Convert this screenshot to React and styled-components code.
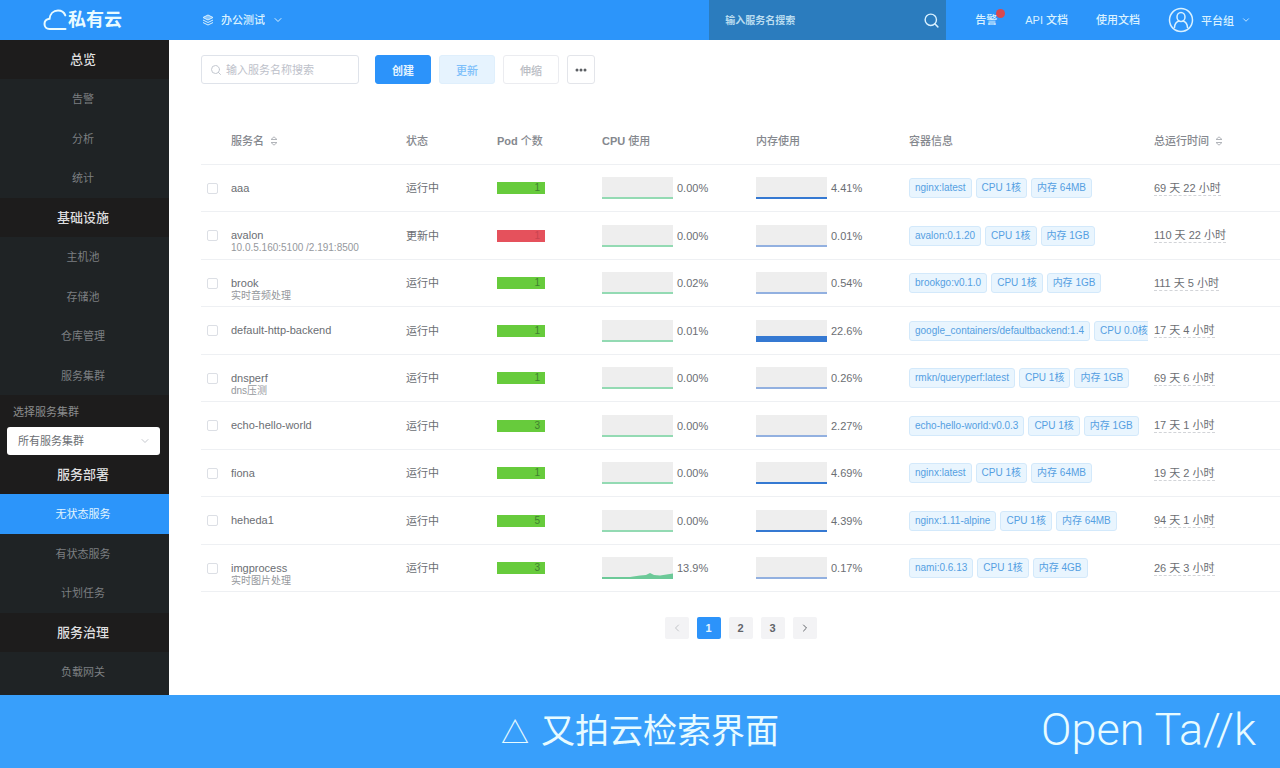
import styled, { createGlobalStyle } from "styled-components";
import { ChevronDown, ChevronLeft, ChevronRight, Search } from "lucide-react";

const GlobalStyle = createGlobalStyle`
  * {
    box-sizing: border-box;
  }

  body {
    margin: 0;
    background: #ffffff;
    color: #6b6e73;
    font-family: "Liberation Sans", "Noto Sans CJK SC", sans-serif;
    font-size: 11px;
    line-height: 14px;
  }

  button, input, select {
    margin: 0;
    font-family: inherit;
    font-size: 11px;
  }

  a {
    color: inherit;
    text-decoration: none;
  }
`;

const Page = styled.div`
  min-height: 100vh;
  display: flex;
  flex-direction: column;
`;

/* Top bar */

const TopBar = styled.header`
  height: 40px;
  display: flex;
  align-items: center;
  background: #2c95fa;
  color: #d9f1ff;
`;

const Logo = styled.a`
  width: 169px;
  padding-right: 4px;
  display: flex;
  align-items: center;
  justify-content: center;
  color: #e9fbff;
  font-size: 18px;
  line-height: 24px;
  font-weight: 700;
`;

const TeamPicker = styled.div`
  margin-left: 33px;
  display: flex;
  align-items: center;
  gap: 7px;
`;

const TeamSelect = styled.select`
  appearance: none;
  padding: 0;
  border: 0;
  background: transparent;
  color: inherit;
  font-weight: 500;
`;

const GlobalSearch = styled.form`
  width: 237px;
  height: 40px;
  margin-left: auto;
  padding: 0 6px 0 16px;
  display: flex;
  align-items: center;
  background: #2b7cbe;
`;

const GlobalSearchInput = styled.input`
  flex: 1;
  min-width: 0;
  padding: 0;
  border: 0;
  outline: 0;
  background: transparent;
  color: #d9f1ff;
  font-size: 10px;
  font-weight: 700;

  &::placeholder {
    color: #b9dcf0;
    opacity: 1;
  }
`;

const IconButton = styled.button`
  display: flex;
  padding: 0;
  border: 0;
  background: transparent;
  color: inherit;
`;

const TopNav = styled.nav`
  padding: 0 29px;
  display: flex;
  align-items: center;
  gap: 28px;
  font-weight: 500;
`;

const AlertLink = styled.a`
  position: relative;
`;

const AlertDot = styled.span`
  position: absolute;
  top: -4px;
  right: -8px;
  width: 9px;
  height: 9px;
  border-radius: 50%;
  background: #d8494f;
`;

const UserMenu = styled.button`
  display: flex;
  align-items: center;
  gap: 7px;
  padding: 0;
  border: 0;
  background: transparent;
  color: inherit;
  font-weight: 500;
`;

/* Side bar */

const Body = styled.div`
  flex: 1;
  display: flex;
`;

const SideBar = styled.nav`
  width: 169px;
  flex-shrink: 0;
  background: #1f2325;
`;

const Menu = styled.div`
  display: flex;
  flex-direction: column;
`;

const MenuRow = styled.a`
  height: 39px;
  padding-right: 3px;
  display: flex;
  align-items: center;
  justify-content: center;
  background: ${({ $active }) => ($active ? "#2c95fa" : "transparent")};
  color: ${({ $active }) => ($active ? "#e3f5ff" : "#7c7f81")};

  &:nth-child(even) {
    height: 40px;
  }
`;

const MenuTitle = styled(MenuRow)`
  background: #1d1c1c;
  color: #dededf;
  font-size: 13px;
  font-weight: 500;
`;

const ClusterBox = styled.div`
  height: 60px;
  padding: 10px 9px 0 7px;
  background: #1d1c1c;
`;

const ClusterLabel = styled.label`
  display: block;
  padding: 0 6px 8px;
  color: #8b8c8d;
`;

const ClusterField = styled.div`
  height: 28px;
  padding: 0 9px 0 11px;
  display: flex;
  align-items: center;
  border-radius: 3px;
  background: #ffffff;
  color: #c5c8ce;
`;

const ClusterSelect = styled.select`
  flex: 1;
  appearance: none;
  padding: 0;
  border: 0;
  background: transparent;
  color: #6b6e73;
`;

/* Content */

const Main = styled.main`
  flex: 1;
  min-width: 0;
  padding: 15px 0 0 32px;
`;

const ToolBar = styled.div`
  display: flex;
  gap: 8px;
  margin-bottom: 34px;
`;

const SearchField = styled.div`
  width: 158px;
  height: 29px;
  margin-right: 8px;
  padding: 0 8px;
  display: flex;
  align-items: center;
  gap: 4px;
  border: 1px solid #dfe3ea;
  border-radius: 3px;
  color: #c3c8d0;
`;

const SearchInput = styled.input`
  flex: 1;
  min-width: 0;
  padding: 0;
  border: 0;
  outline: 0;
  color: #6b6e73;

  &::placeholder {
    color: #bdc1ca;
    opacity: 1;
  }
`;

const buttonKinds = {
  primary: { bg: "#2c93fa", line: "#2c93fa", text: "#e6f5ff" },
  soft: { bg: "#e6f3fe", line: "#dfeffc", text: "#7dbffa" },
  plain: { bg: "#ffffff", line: "#ebecf0", text: "#b9bcc3" },
  more: { bg: "#ffffff", line: "#e3e5ea", text: "#5c5f64" },
};

const Button = styled.button`
  width: ${({ $small }) => ($small ? 28 : 56)}px;
  height: 29px;
  padding: 0;
  display: flex;
  align-items: center;
  justify-content: center;
  border: 1px solid ${({ $kind }) => buttonKinds[$kind].line};
  border-radius: 3px;
  background: ${({ $kind }) => buttonKinds[$kind].bg};
  color: ${({ $kind }) => buttonKinds[$kind].text};
  font-weight: ${({ $kind }) => ($kind === "primary" ? 700 : 500)};
`;

const Table = styled.table`
  width: 100%;
  table-layout: fixed;
  border-collapse: separate;
  border-spacing: 0;
`;

const Col = styled.col`
  width: ${({ $width }) => ($width ? `${$width}px` : "auto")};
`;

const HeadCell = styled.th`
  height: 47px;
  padding: 0;
  border-bottom: 1px solid #eef0f3;
  color: #85888e;
  font-weight: 500;
  text-align: left;
`;

const LatinBold = styled.span`
  font-weight: 700;
`;

const SortIcon = styled.svg`
  margin-left: 6px;
  vertical-align: -1px;
`;

const Row = styled.tr`
  height: 47px;

  &:nth-child(even) {
    height: 48px;
  }
`;

const Cell = styled.td`
  padding: 0;
  border-bottom: 1px solid #eef0f3;
  white-space: nowrap;
`;

const CheckCell = styled(Cell)`
  padding-left: 6px;
  line-height: 0;
`;

const CheckBox = styled.input`
  appearance: none;
  width: 11px;
  height: 11px;
  margin: 0;
  border: 1px solid #dcdfe5;
  border-radius: 2px;
  background: #ffffff;
`;

const NameCell = styled(Cell)`
  padding-top: 16px;
  vertical-align: top;
`;

const Note = styled.div`
  color: #95989d;
  font-size: 10px;
  line-height: 11px;
`;

const TagCell = styled(Cell)`
  padding-right: 6px;
`;

const PodBar = styled.div`
  width: 48px;
  height: 12px;
  padding-right: 5px;
  background: ${({ $failing }) => ($failing ? "#e5515c" : "#67cb3c")};
  color: ${({ $failing }) => ($failing ? "#c94450" : "#3f8130")};
  font-size: 10px;
  line-height: 12px;
  text-align: right;
`;

const Usage = styled.div`
  display: flex;
  align-items: center;
  gap: 4px;
`;

const Tags = styled.div`
  display: flex;
  gap: 4px;
  overflow: hidden;
`;

const Tag = styled.span`
  flex-shrink: 0;
  height: 20px;
  padding: 0 5px;
  border: 1px solid #d3e9fb;
  border-radius: 3px;
  background: #e9f5fe;
  color: #559fe2;
  font-size: 10px;
  line-height: 18px;
`;

const Uptime = styled.span`
  display: inline-block;
  border-bottom: 1px dashed #d2d4d8;
  line-height: 13px;
`;

const Pager = styled.nav`
  display: flex;
  justify-content: center;
  gap: 8px;
  padding: 25px 0;
`;

const PageButton = styled.button`
  width: 24px;
  height: 22px;
  padding: 0;
  display: flex;
  align-items: center;
  justify-content: center;
  border: 0;
  border-radius: 2px;
  background: ${({ $active }) => ($active ? "#2c93fa" : "#f3f3f5")};
  color: ${({ $active }) => ($active ? "#e6f5ff" : "#616469")};
  font-weight: 700;

  &:disabled {
    color: #c3c5c9;
  }
`;

/* Caption */

const CaptionBar = styled.footer`
  height: 73px;
  padding: 0 24px 4px;
  display: grid;
  grid-template-columns: 1fr auto 1fr;
  align-items: center;
  background: #389ffb;
  color: #e8fbff;
`;

const Caption = styled.p`
  grid-column: 2;
  margin: 0;
  display: flex;
  align-items: baseline;
  gap: 12px;
  font-family: "Noto Sans CJK SC", sans-serif;
  font-size: 34px;
  line-height: 48px;
`;

const Triangle = styled.span`
  font-size: 28px;
`;

const Brand = styled.p`
  margin: 0;
  justify-self: end;
  font-family: Roboto, sans-serif;
  font-size: 45px;
  font-weight: 300;
  line-height: 48px;
  white-space: nowrap;
`;

const overview = ["告警", "分析", "统计"];
const infrastructure = ["主机池", "存储池", "仓库管理", "服务集群"];
const deployment = ["无状态服务", "有状态服务", "计划任务"];

const columns = [30, 175, 91, 105, 154, 153, 245, null];

const services = [
  { name: "aaa", pods: 1, cpu: "0.00%", mem: "4.41%", level: 2, tags: ["nginx:latest", "CPU 1核", "内存 64MB"], uptime: "69 天 22 小时" },
  { name: "avalon", note: "10.0.5.160:5100 /2.191:8500", updating: true, pods: 1, cpu: "0.00%", mem: "0.01%", level: 1, tags: ["avalon:0.1.20", "CPU 1核", "内存 1GB"], uptime: "110 天 22 小时" },
  { name: "brook", note: "实时音频处理", pods: 1, cpu: "0.02%", mem: "0.54%", level: 1, tags: ["brookgo:v0.1.0", "CPU 1核", "内存 1GB"], uptime: "111 天 5 小时" },
  { name: "default-http-backend", pods: 1, cpu: "0.01%", mem: "22.6%", level: 6, tags: ["google_containers/defaultbackend:1.4", "CPU 0.0核"], uptime: "17 天 4 小时" },
  { name: "dnsperf", note: "dns压测", pods: 1, cpu: "0.00%", mem: "0.26%", level: 1, tags: ["rmkn/queryperf:latest", "CPU 1核", "内存 1GB"], uptime: "69 天 6 小时" },
  { name: "echo-hello-world", pods: 3, cpu: "0.00%", mem: "2.27%", level: 1, tags: ["echo-hello-world:v0.0.3", "CPU 1核", "内存 1GB"], uptime: "17 天 1 小时" },
  { name: "fiona", pods: 1, cpu: "0.00%", mem: "4.69%", level: 2, tags: ["nginx:latest", "CPU 1核", "内存 64MB"], uptime: "19 天 2 小时" },
  { name: "heheda1", pods: 5, cpu: "0.00%", mem: "4.39%", level: 2, tags: ["nginx:1.11-alpine", "CPU 1核", "内存 64MB"], uptime: "94 天 1 小时" },
  { name: "imgprocess", note: "实时图片处理", pods: 3, cpu: "13.9%", busy: true, mem: "0.17%", level: 1, tags: ["nami:0.6.13", "CPU 1核", "内存 4GB"], uptime: "26 天 3 小时" },
];

function CloudIcon() {
  return (
    <svg width="25" height="22" viewBox="0 0 25 22" fill="none" stroke="currentColor" strokeWidth="2" strokeLinecap="round">
      <path d="M22.500 20H6.500C3.500 20 1.500 17.800 1.500 15c0-2.700 2-4.800 5-5.200C7 5 10.300 1.500 15 1.500c3.400 0 6.200 1.900 7.300 4.900" />
    </svg>
  );
}

function LayersIcon() {
  return (
    <svg width="12" height="12" viewBox="0 0 12 12" fill="none" stroke="currentColor" strokeLinejoin="round">
      <path d="M6 1 11 3.500 6 6 1 3.500Z" fill="currentColor" fillOpacity="0.5" />
      <path d="M1 6 6 8.500 11 6M1 8.500 6 11l5-2.500" />
    </svg>
  );
}

function AvatarIcon() {
  return (
    <svg width="26" height="26" viewBox="0 0 26 26" fill="none" stroke="currentColor" strokeWidth="1.5" strokeLinecap="round">
      <circle cx="13" cy="13" r="11.500" />
      <ellipse cx="13" cy="10" rx="4" ry="4.500" />
      <path d="M6.500 20.500c.2-3.500 2-5.700 4.500-6.500M19.500 20.500c-.2-3.500-2-5.700-4.500-6.500" />
    </svg>
  );
}

function Sorter() {
  return (
    <SortIcon width="8" height="10" viewBox="0 0 8 10" fill="none" stroke="#b2b5ba">
      <path d="M1 3.500 4 .8l3 2.700ZM1 6.500l3 2.700 3-2.700Z" />
    </SortIcon>
  );
}

function CpuChart({ busy }) {
  return (
    <svg width="71" height="22" viewBox="0 0 71 22">
      <rect width="71" height="20" fill="#eeeeee" />
      {busy && (
        <path d="M0 20H28L38 18.500 44 18 48 16 52 18 58 18.500 71 16.500V20Z" fill="#6cc998" />
      )}
      <rect y="20" width="71" height="2" fill={busy ? "#6cc998" : "#93dab3"} shapeRendering="crispEdges" />
    </svg>
  );
}

function MemoryChart({ level }) {
  return (
    <svg width="71" height="22" viewBox="0 0 71 22">
      <rect width="71" height="21" fill="#eeeeee" />
      <rect
        y={level > 1 ? 22 - level : 20}
        width="71"
        height={level > 1 ? level : 2}
        fill={level > 1 ? "#3579d2" : "#92b0e0"}
        shapeRendering="crispEdges"
      />
    </svg>
  );
}

function ServiceRow({ service }) {
  return (
    <Row>
      <CheckCell>
        <CheckBox type="checkbox" aria-label={service.name} />
      </CheckCell>
      <NameCell>
        {service.name}
        {service.note && <Note>{service.note}</Note>}
      </NameCell>
      <Cell>{service.updating ? "更新中" : "运行中"}</Cell>
      <Cell>
        <PodBar $failing={service.updating}>{service.pods}</PodBar>
      </Cell>
      <Cell>
        <Usage>
          <CpuChart busy={service.busy} />
          {service.cpu}
        </Usage>
      </Cell>
      <Cell>
        <Usage>
          <MemoryChart level={service.level} />
          {service.mem}
        </Usage>
      </Cell>
      <TagCell>
        <Tags>
          {service.tags.map((tag) => (
            <Tag key={tag}>{tag}</Tag>
          ))}
        </Tags>
      </TagCell>
      <Cell>
        <Uptime>{service.uptime}</Uptime>
      </Cell>
    </Row>
  );
}

function App() {
  return (
    <Page>
      <GlobalStyle />

      <TopBar>
        <Logo href="#home">
          <CloudIcon />
          私有云
        </Logo>

        <TeamPicker>
          <LayersIcon />
          <TeamSelect aria-label="团队">
            <option>办公测试</option>
          </TeamSelect>
          <ChevronDown size={12} />
        </TeamPicker>

        <GlobalSearch role="search">
          <GlobalSearchInput type="text" placeholder="输入服务名搜索" aria-label="输入服务名搜索" />
          <IconButton type="button" aria-label="搜索">
            <Search size={17} strokeWidth={2} />
          </IconButton>
        </GlobalSearch>

        <TopNav>
          <AlertLink href="#alerts">
            告警
            <AlertDot />
          </AlertLink>
          <a href="#api">API 文档</a>
          <a href="#docs">使用文档</a>
          <UserMenu type="button">
            <AvatarIcon />
            平台组
            <ChevronDown size={10} />
          </UserMenu>
        </TopNav>
      </TopBar>

      <Body>
        <SideBar>
          <Menu>
            <MenuTitle as="div">总览</MenuTitle>
            {overview.map((item) => (
              <MenuRow key={item} href="#menu">{item}</MenuRow>
            ))}
            <MenuTitle as="div">基础设施</MenuTitle>
            {infrastructure.map((item) => (
              <MenuRow key={item} href="#menu">{item}</MenuRow>
            ))}
          </Menu>

          <ClusterBox>
            <ClusterLabel htmlFor="cluster">选择服务集群</ClusterLabel>
            <ClusterField>
              <ClusterSelect id="cluster">
                <option>所有服务集群</option>
              </ClusterSelect>
              <ChevronDown size={12} />
            </ClusterField>
          </ClusterBox>

          <Menu>
            <MenuTitle as="div">服务部署</MenuTitle>
            {deployment.map((item, i) => (
              <MenuRow key={item} href="#menu" $active={i === 0}>{item}</MenuRow>
            ))}
            <MenuTitle as="div">服务治理</MenuTitle>
            <MenuRow href="#menu">负载网关</MenuRow>
          </Menu>
        </SideBar>

        <Main>
          <ToolBar>
            <SearchField>
              <Search size={12} />
              <SearchInput type="text" placeholder="输入服务名称搜索" aria-label="输入服务名称搜索" />
            </SearchField>
            <Button type="button" $kind="primary">创建</Button>
            <Button type="button" $kind="soft">更新</Button>
            <Button type="button" $kind="plain">伸缩</Button>
            <Button type="button" $kind="more" $small aria-label="更多">
              <svg width="12" height="4" viewBox="0 0 12 4" fill="currentColor">
                <circle cx="2" cy="2" r="1.500" />
                <circle cx="6" cy="2" r="1.500" />
                <circle cx="10" cy="2" r="1.500" />
              </svg>
            </Button>
          </ToolBar>

          <Table>
            <colgroup>
              {columns.map((width, i) => (
                <Col key={i} $width={width} />
              ))}
            </colgroup>
            <thead>
              <tr>
                <HeadCell />
                <HeadCell>服务名<Sorter /></HeadCell>
                <HeadCell>状态</HeadCell>
                <HeadCell><LatinBold>Pod</LatinBold> 个数</HeadCell>
                <HeadCell><LatinBold>CPU</LatinBold> 使用</HeadCell>
                <HeadCell>内存使用</HeadCell>
                <HeadCell>容器信息</HeadCell>
                <HeadCell>总运行时间<Sorter /></HeadCell>
              </tr>
            </thead>
            <tbody>
              {services.map((service) => (
                <ServiceRow key={service.name} service={service} />
              ))}
            </tbody>
          </Table>

          <Pager aria-label="分页">
            <PageButton type="button" disabled aria-label="上一页">
              <ChevronLeft size={12} />
            </PageButton>
            <PageButton type="button" $active>1</PageButton>
            <PageButton type="button">2</PageButton>
            <PageButton type="button">3</PageButton>
            <PageButton type="button" aria-label="下一页">
              <ChevronRight size={12} />
            </PageButton>
          </Pager>
        </Main>
      </Body>

      <CaptionBar>
        <Caption>
          <Triangle>△</Triangle>
          又拍云检索界面
        </Caption>
        <Brand>Open Ta//k</Brand>
      </CaptionBar>
    </Page>
  );
}

export default App;
